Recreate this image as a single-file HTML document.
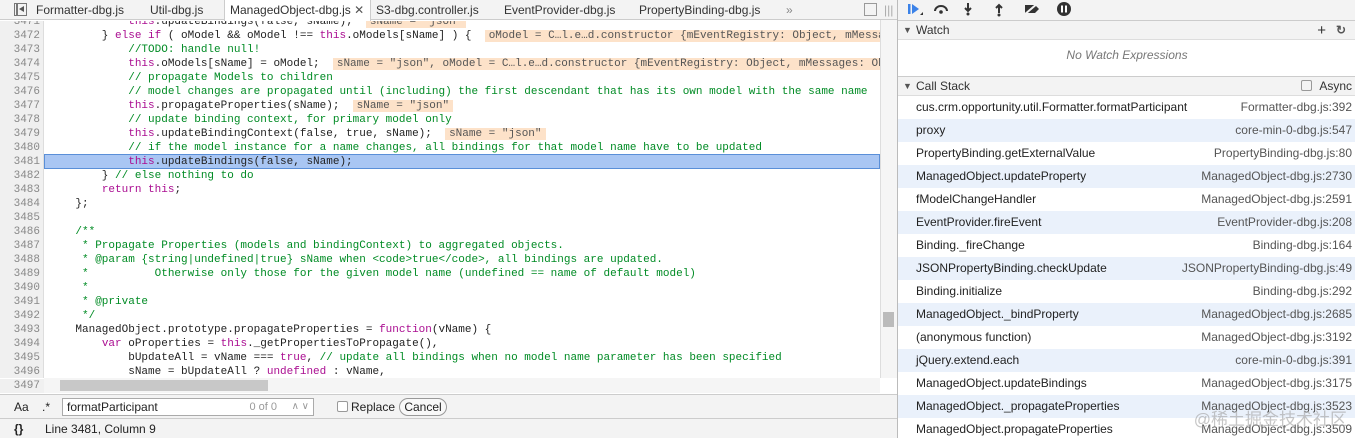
<!DOCTYPE html>
<html><head><meta charset="utf-8"><style>
*{box-sizing:border-box;margin:0;padding:0}
body{width:1355px;height:438px;overflow:hidden;background:#fff;font-family:"Liberation Sans",sans-serif;font-size:12px;color:#222;position:relative}
.tabs{position:absolute;left:0;top:0;width:897px;height:20px;background:#f3f3f3;border-bottom:1px solid #ccc}
.tab{position:absolute;top:0;height:20px;line-height:20px;font-size:12px;color:#333}
.code{position:absolute;left:0;top:21px;width:880px;height:357px;overflow:hidden;background:#fff}
.gut{position:absolute;left:0;top:0;width:44px;height:358px;background:#f0f0f0;border-right:1px solid #ddd}
.ln{position:absolute;left:0;width:40px;text-align:right;font-family:"Liberation Mono",monospace;font-size:11px;color:#888;height:14px;line-height:14px}
.l{position:absolute;left:49px;white-space:pre;font-family:"Liberation Mono",monospace;font-size:11px;height:14px;line-height:14px;color:#222}
.k{color:#aa0d91}.c{color:#008b24}.s{color:#c41a16}
.v{background:#fde2c9;color:#555;padding:0 4px}
.hl{position:absolute;left:44px;width:836px;height:15px;background:#a9c6f3;border:1px solid #5a8fd8}
.vs{position:absolute;left:880px;top:20px;width:17px;height:358px;background:#f5f5f5;border-left:1px solid #ddd}
.hs{position:absolute;left:44px;top:378px;width:836px;height:15px;background:#f5f5f5}
.search{position:absolute;left:0;top:394px;width:897px;height:24px;background:#f3f3f3;border-top:1px solid #ccc}
.status{position:absolute;left:0;top:418px;width:897px;height:20px;background:#f3f3f3;border-top:1px solid #ccc;font-size:12px;line-height:20px}
.rp{position:absolute;left:897px;top:0;width:458px;height:438px;border-left:1px solid #bbb;background:#fff}
.hdr{position:absolute;left:0;width:458px;height:20px;background:#f3f3f3;border-top:1px solid #ccc;border-bottom:1px solid #ddd;line-height:19px;padding-left:18px;font-size:12px;color:#333}
.row{position:absolute;left:0;width:458px;height:23px;line-height:23px;padding-left:18px;font-size:12px;color:#222}
.row.a{background:#eaf1fb}
.row span{position:absolute;right:4px;color:#555}
</style></head><body>
<div class="tabs">
 <div style="position:absolute;left:14px;top:3px;width:13px;height:13px;border:1px solid #777"><div style="position:absolute;left:1px;top:0;width:2px;height:11px;background:#777"></div><div style="position:absolute;left:4px;top:2px;border-right:5px solid #555;border-top:3.5px solid transparent;border-bottom:3.5px solid transparent"></div></div>
 <div class="tab" style="left:36px">Formatter-dbg.js</div>
 <div class="tab" style="left:150px">Util-dbg.js</div>
 <div class="tab" style="left:224px;width:147px;background:#fff;border-left:1px solid #ccc;border-right:1px solid #ccc;height:21px;padding-left:5px">ManagedObject-dbg.js <span style="color:#555">✕</span></div>
 <div class="tab" style="left:376px">S3-dbg.controller.js</div>
 <div class="tab" style="left:504px">EventProvider-dbg.js</div>
 <div class="tab" style="left:639px">PropertyBinding-dbg.js</div>
 <div class="tab" style="left:786px;color:#888">»</div>
 <div style="position:absolute;left:864px;top:3px;width:13px;height:13px;border:1px solid #999"></div>
 <div class="tab" style="left:884px;color:#aaa">|||</div>
</div>
<div class="code">
 <div class="gut"></div>
 <div class="hl" style="top:133px"></div>
 <div class="ln" style="top:-6px">3471</div><div class="l" style="top:-6px">            <span class="k">this</span>.updateBindings(false, sName);  <span class="v">sName = "json"</span></div>
 <div class="ln" style="top:8px">3472</div><div class="l" style="top:8px">        } <span class="k">else if</span> ( oModel &amp;&amp; oModel !== <span class="k">this</span>.oModels[sName] ) {  <span class="v">oModel = C…l.e…d.constructor {mEventRegistry: Object, mMessages: Object</span></div>
 <div class="ln" style="top:22px">3473</div><div class="l" style="top:22px">            <span class="c">//TODO: handle null!</span></div>
 <div class="ln" style="top:36px">3474</div><div class="l" style="top:36px">            <span class="k">this</span>.oModels[sName] = oModel;  <span class="v">sName = "json", oModel = C…l.e…d.constructor {mEventRegistry: Object, mMessages: Ob</span></div>
 <div class="ln" style="top:50px">3475</div><div class="l c" style="top:50px">            // propagate Models to children</div>
 <div class="ln" style="top:64px">3476</div><div class="l c" style="top:64px">            // model changes are propagated until (including) the first descendant that has its own model with the same name</div>
 <div class="ln" style="top:78px">3477</div><div class="l" style="top:78px">            <span class="k">this</span>.propagateProperties(sName);  <span class="v">sName = "json"</span></div>
 <div class="ln" style="top:92px">3478</div><div class="l c" style="top:92px">            // update binding context, for primary model only</div>
 <div class="ln" style="top:106px">3479</div><div class="l" style="top:106px">            <span class="k">this</span>.updateBindingContext(false, true, sName);  <span class="v">sName = "json"</span></div>
 <div class="ln" style="top:120px">3480</div><div class="l c" style="top:120px">            // if the model instance for a name changes, all bindings for that model name have to be updated</div>
 <div class="ln" style="top:134px">3481</div><div class="l" style="top:134px">            <span class="k">this</span>.updateBindings(false, sName);</div>
 <div class="ln" style="top:148px">3482</div><div class="l" style="top:148px">        } <span class="c">// else nothing to do</span></div>
 <div class="ln" style="top:162px">3483</div><div class="l" style="top:162px">        <span class="k">return this</span>;</div>
 <div class="ln" style="top:176px">3484</div><div class="l" style="top:176px">    };</div>
 <div class="ln" style="top:190px">3485</div>
 <div class="ln" style="top:204px">3486</div><div class="l c" style="top:204px">    /**</div>
 <div class="ln" style="top:218px">3487</div><div class="l c" style="top:218px">     * Propagate Properties (models and bindingContext) to aggregated objects.</div>
 <div class="ln" style="top:232px">3488</div><div class="l c" style="top:232px">     * @param {string|undefined|true} sName when &lt;code&gt;true&lt;/code&gt;, all bindings are updated.</div>
 <div class="ln" style="top:246px">3489</div><div class="l c" style="top:246px">     *          Otherwise only those for the given model name (undefined == name of default model)</div>
 <div class="ln" style="top:260px">3490</div><div class="l c" style="top:260px">     *</div>
 <div class="ln" style="top:274px">3491</div><div class="l c" style="top:274px">     * @private</div>
 <div class="ln" style="top:288px">3492</div><div class="l c" style="top:288px">     */</div>
 <div class="ln" style="top:302px">3493</div><div class="l" style="top:302px">    ManagedObject.prototype.propagateProperties = <span class="k">function</span>(vName) {</div>
 <div class="ln" style="top:316px">3494</div><div class="l" style="top:316px">        <span class="k">var</span> oProperties = <span class="k">this</span>._getPropertiesToPropagate(),</div>
 <div class="ln" style="top:330px">3495</div><div class="l" style="top:330px">            bUpdateAll = vName === <span class="k">true</span>, <span class="c">// update all bindings when no model name parameter has been specified</span></div>
 <div class="ln" style="top:344px">3496</div><div class="l" style="top:344px">            sName = bUpdateAll ? <span class="k">undefined</span> : vName,</div>
</div>
<div class="ln" style="top:379px;background:#f0f0f0;width:44px;padding-right:4px">3497</div>
<div class="vs"><div style="position:absolute;left:2px;top:292px;width:11px;height:15px;background:#bbb"></div></div>
<div class="hs"><div style="position:absolute;left:16px;top:2px;width:208px;height:11px;background:#c8c8c8"></div></div>
<div class="search">
 <span style="position:absolute;left:14px;top:5px;font-size:12px">Aa</span>
 <span style="position:absolute;left:42px;top:5px">.*</span>
 <div style="position:absolute;left:62px;top:3px;width:252px;height:18px;background:#fff;border:1px solid #aaa;padding-left:4px;line-height:16px">formatParticipant<span style="position:absolute;right:36px;color:#999;font-size:11px">0 of 0</span><span style="position:absolute;right:4px;color:#999;font-size:10px">∧ ∨</span></div>
 <div style="position:absolute;left:337px;top:6px;width:11px;height:11px;border:1px solid #999;border-radius:2px;background:#fff"></div>
 <span style="position:absolute;left:351px;top:5px">Replace</span>
 <div style="position:absolute;left:399px;top:3px;width:48px;height:18px;border:1px solid #999;border-radius:9px;text-align:center;line-height:16px;background:#f8f8f8">Cancel</div>
</div>
<div class="status"><span style="position:absolute;left:14px;font-weight:bold">{}</span><span style="position:absolute;left:45px">Line 3481, Column 9</span></div>
<div class="rp">
 <div style="position:absolute;left:0;top:0;width:458px;height:20px;background:#f3f3f3">
  <svg width="200" height="20" style="position:absolute;left:8px;top:0">
   <rect x="2" y="4" width="2.5" height="10" fill="#3b82e8"/><path d="M6 4 L13 9 L6 14Z" fill="#3b82e8"/><path d="M14 15 L17 15 L17 12Z" fill="#333"/>
   <path d="M29 11 A6 5 0 0 1 41 11" stroke="#333" stroke-width="2" fill="none"/><circle cx="35" cy="12" r="1.8" fill="#333"/>
   <path d="M62 3 V10 M59 8 L62 11 L65 8" stroke="#333" stroke-width="2" fill="none"/><circle cx="62" cy="14" r="1.5" fill="#333"/>
   <path d="M93 13 V6 M90 8 L93 5 L96 8" stroke="#333" stroke-width="2" fill="none"/><circle cx="93" cy="15" r="1.5" fill="#333"/>
   <path d="M119 5 H129 L133 9 L129 13 H119Z" fill="#333"/><path d="M118 15 L132 3" stroke="#f3f3f3" stroke-width="2"/>
   <circle cx="158" cy="9" r="7" fill="#333"/><rect x="155" y="5.5" width="2" height="7" fill="#fff"/><rect x="159" y="5.5" width="2" height="7" fill="#fff"/>
  </svg>
 </div>
 <div class="hdr" style="top:20px"><span style="position:absolute;left:5px;font-size:9px;color:#555">▼</span>Watch<span style="position:absolute;right:30px;font-size:15px">+</span><span style="position:absolute;right:10px;font-weight:bold;color:#555">↻</span></div>
 <div style="position:absolute;top:48px;width:458px;text-align:center;font-style:italic;color:#777">No Watch Expressions</div>
 <div class="hdr" style="top:76px"><span style="position:absolute;left:5px;font-size:9px;color:#555">▼</span>Call Stack<span style="position:absolute;right:44px;top:3px;width:11px;height:11px;border:1px solid #999;border-radius:2px"></span><span style="position:absolute;right:4px">Async</span></div>
 <div class="row" style="top:96px">cus.crm.opportunity.util.Formatter.formatParticipant<span>Formatter-dbg.js:392</span></div>
 <div class="row a" style="top:119px">proxy<span>core-min-0-dbg.js:547</span></div>
 <div class="row" style="top:142px">PropertyBinding.getExternalValue<span>PropertyBinding-dbg.js:80</span></div>
 <div class="row a" style="top:165px">ManagedObject.updateProperty<span>ManagedObject-dbg.js:2730</span></div>
 <div class="row" style="top:188px">fModelChangeHandler<span>ManagedObject-dbg.js:2591</span></div>
 <div class="row a" style="top:211px">EventProvider.fireEvent<span>EventProvider-dbg.js:208</span></div>
 <div class="row" style="top:234px">Binding._fireChange<span>Binding-dbg.js:164</span></div>
 <div class="row a" style="top:257px">JSONPropertyBinding.checkUpdate<span>JSONPropertyBinding-dbg.js:49</span></div>
 <div class="row" style="top:280px">Binding.initialize<span>Binding-dbg.js:292</span></div>
 <div class="row a" style="top:303px">ManagedObject._bindProperty<span>ManagedObject-dbg.js:2685</span></div>
 <div class="row" style="top:326px">(anonymous function)<span>ManagedObject-dbg.js:3192</span></div>
 <div class="row a" style="top:349px">jQuery.extend.each<span>core-min-0-dbg.js:391</span></div>
 <div class="row" style="top:372px">ManagedObject.updateBindings<span>ManagedObject-dbg.js:3175</span></div>
 <div class="row a" style="top:395px">ManagedObject._propagateProperties<span>ManagedObject-dbg.js:3523</span></div>
 <div class="row" style="top:418px">ManagedObject.propagateProperties<span>ManagedObject-dbg.js:3509</span></div>
 <div style="position:absolute;right:8px;top:405px;font-family:'Liberation Sans','Noto Sans CJK SC',sans-serif;font-size:17px;color:rgba(160,160,160,0.6)">@稀土掘金技术社区</div>
</div>
</body></html>
